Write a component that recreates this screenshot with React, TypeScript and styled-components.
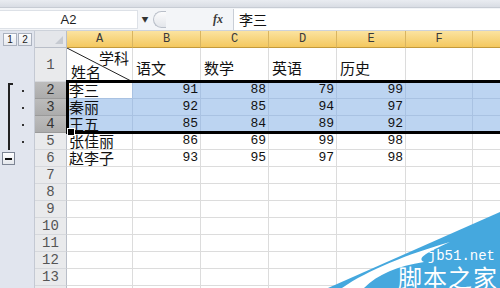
import React from "react";
import styled, { createGlobalStyle, css } from "styled-components";

const GlobalStyle = createGlobalStyle`
  html, body {
    margin: 0;
    padding: 0;
    background: #ffffff;
  }
  body {
    font-family: "Noto Sans CJK SC", "Liberation Sans", sans-serif;
  }
`;

const CJK = `"Noto Sans CJK SC", sans-serif`;
const MONO = `"Liberation Mono", "DejaVu Sans Mono", monospace`;

const Page = styled.div`
  position: relative;
  width: 500px;
  height: 288px;
  overflow: hidden;
  background: #ffffff;
`;

const RibbonEdge = styled.div`
  height: 8px;
  background: linear-gradient(#e9ecf1, #d9dde4);
  border-bottom: 1px solid #c7ccd4;
  box-sizing: border-box;
`;

const FormulaBar = styled.div`
  height: 23px;
  display: flex;
  align-items: center;
  background: #f3f5f8;
  border-bottom: 1px solid #cdd2da;
  box-sizing: border-box;
`;

const NameBox = styled.div`
  width: 138px;
  height: 19px;
  background: #ffffff;
  border: 1px solid #dde1e7;
  border-left: none;
  display: flex;
  align-items: center;
  justify-content: center;
  font-family: "Liberation Sans", Arial, sans-serif;
  font-size: 13px;
  color: #1e1e1e;
  box-sizing: border-box;
`;

const DropArrow = styled.div`
  width: 14px;
  display: flex;
  justify-content: center;
  font-size: 7px;
  color: #333;
`;

const Grip = styled.div`
  width: 13px;
  height: 17px;
  margin-left: 1px;
  border: 1px solid #b9bfc9;
  border-right: none;
  border-radius: 9px 0 0 9px;
  background: linear-gradient(#fbfbfc, #e3e6eb);
  box-sizing: border-box;
`;

const FxButton = styled.div`
  margin-left: auto;
  width: 30px;
  text-align: center;
  font-family: "Liberation Serif", serif;
  font-style: italic;
  font-weight: bold;
  font-size: 12px;
  color: #3b3b3b;
`;

const FormulaInput = styled.div`
  width: 267px;
  height: 21px;
  background: #ffffff;
  border-left: 1px solid #c9ced6;
  display: flex;
  align-items: center;
  padding-left: 5px;
  font-family: ${CJK};
  font-size: 14px;
  color: #111;
  box-sizing: border-box;
`;

const Sheet = styled.div`
  position: relative;
  display: grid;
  grid-template-columns: 35px 32px 66px 68px 68px 68px 69px 67px 67px;
  grid-template-rows: 17px 34px repeat(13, 17px);
  width: 540px;
`;

const Gutter = styled.div`
  position: relative;
  background: #e1e5ee;
  border-right: 1px solid #c4c9d3;
  box-sizing: border-box;
`;

const LevelButtons = styled.div`
  display: flex;
  gap: 1px;
  padding: 2px 0 0 3px;
`;

const LevelButton = styled.div`
  width: 14px;
  height: 13px;
  border: 1px solid #aab1be;
  background: linear-gradient(#fdfdfe, #e6e9ef);
  font-family: "Liberation Sans", Arial, sans-serif;
  font-size: 10px;
  line-height: 11px;
  text-align: center;
  color: #222;
  box-sizing: border-box;
`;

const Bracket = styled.div<{ $top?: boolean }>`
  position: absolute;
  left: 8px;
  top: 0;
  bottom: 0;
  width: 5px;
  border-left: 2px solid #222;
  box-sizing: border-box;
  ${(p) =>
    p.$top &&
    css`
      top: 1px;
      border-top: 2px solid #222;
    `}
`;

const Dot = styled.div`
  position: absolute;
  left: 22px;
  top: 8px;
  width: 2px;
  height: 2px;
  background: #333;
`;

const CollapseButton = styled.div`
  position: absolute;
  left: 2px;
  top: 2px;
  width: 13px;
  height: 13px;
  border: 1px solid #7d8594;
  background: linear-gradient(#ffffff, #e4e7ec);
  box-sizing: border-box;
  display: flex;
  align-items: center;
  justify-content: center;
  &::after {
    content: "";
    width: 7px;
    height: 2px;
    background: #111;
  }
`;

const Corner = styled.div`
  position: relative;
  background: #e4e6ea;
  border-right: 1px solid #b9bec8;
  border-bottom: 1px solid #b9bec8;
  box-sizing: border-box;
  &::after {
    content: "";
    position: absolute;
    right: 3px;
    bottom: 3px;
    border-left: 8px solid transparent;
    border-bottom: 8px solid #c6cad1;
  }
`;

const ColHead = styled.div`
  display: flex;
  align-items: center;
  justify-content: center;
  background: linear-gradient(#fbe3a0, #f4c85f);
  border-right: 1px solid #d9b560;
  border-bottom: 1px solid #c39a3c;
  font-family: ${MONO};
  font-size: 12px;
  color: #3a3a3a;
  box-sizing: border-box;
`;

const RowHead = styled.div<{ $selected?: boolean }>`
  display: flex;
  align-items: center;
  justify-content: center;
  background: ${(p) => (p.$selected ? "linear-gradient(#bcbcbc, #acacac)" : "#e9eaec")};
  border-right: 1px solid #b9bec8;
  border-bottom: 1px solid ${(p) => (p.$selected ? "#9a9a9a" : "#d6d8dc")};
  font-family: ${MONO};
  font-size: 14px;
  color: ${(p) => (p.$selected ? "#333" : "#555")};
  box-sizing: border-box;
`;

const Cell = styled.div<{ $selected?: boolean; $num?: boolean; $active?: boolean; $header?: boolean }>`
  display: flex;
  align-items: ${(p) => (p.$header ? "flex-end" : "center")};
  justify-content: ${(p) => (p.$num ? "flex-end" : "flex-start")};
  padding: ${(p) => (p.$header ? "0 0 5px 3px" : p.$num ? "0 2px 0 0" : "0 0 0 2px")};
  background: ${(p) => (p.$selected && !p.$active ? "#bcd4f1" : "#ffffff")};
  border-right: 1px solid ${(p) => (p.$selected ? "#a9c2e2" : "#dcdcdc")};
  border-bottom: 1px solid ${(p) => (p.$selected ? "#a9c2e2" : "#dcdcdc")};
  font-family: ${(p) => (p.$num ? MONO : CJK)};
  font-size: ${(p) => (p.$num ? "13px" : "15px")};
  line-height: 16px;
  color: #111;
  box-sizing: border-box;
  white-space: nowrap;
`;

const SplitCell = styled.div`
  position: relative;
  background: #ffffff;
  border-right: 1px solid #dcdcdc;
  border-bottom: 1px solid #dcdcdc;
  box-sizing: border-box;
  font-family: ${CJK};
  font-size: 15px;
  line-height: 16px;
  color: #111;
`;

const SplitLine = styled.svg`
  position: absolute;
  inset: 0;
`;

const SplitTop = styled.span`
  position: absolute;
  right: 3px;
  top: 2px;
`;

const SplitBottom = styled.span`
  position: absolute;
  left: 4px;
  bottom: 1px;
`;

const Selection = styled.div`
  position: absolute;
  left: 66px;
  right: -10px;
  top: 49px;
  height: 54px;
  border: 3px solid #000;
  border-right: none;
  box-sizing: border-box;
  pointer-events: none;
`;

const FillHandle = styled.div`
  position: absolute;
  left: -2px;
  bottom: -5px;
  width: 6px;
  height: 6px;
  background: #000;
  border: 1px solid #fff;
`;

const Watermark = styled.div`
  position: absolute;
  right: 0;
  bottom: 0;
  width: 172px;
  height: 76px;
`;

const WatermarkShape = styled.svg`
  position: absolute;
  inset: 0;
`;

const WatermarkText = styled.div`
  position: absolute;
  right: 2px;
  bottom: -1px;
  display: flex;
  flex-direction: column;
  align-items: flex-end;
  gap: 2px;
  color: #ffffff;
`;

const Domain = styled.span`
  font-family: ${MONO};
  font-size: 14px;
  line-height: 14px;
  margin-right: 3px;
`;

const BrandName = styled.span`
  font-family: ${CJK};
  font-size: 24px;
  line-height: 24px;
  letter-spacing: 1px;
`;

type Row = { name: string; scores: number[] };

const data: Row[] = [
  { name: "李三", scores: [91, 88, 79, 99] },
  { name: "秦丽", scores: [92, 85, 94, 97] },
  { name: "王五", scores: [85, 84, 89, 92] },
  { name: "张佳丽", scores: [86, 69, 99, 98] },
  { name: "赵李子", scores: [93, 95, 97, 98] },
];

const columns = ["A", "B", "C", "D", "E", "F", "G"];
const subjects = ["语文", "数学", "英语", "历史", "", ""];

const App: React.FC = () => {
  const emptyRows = Array.from({ length: 8 }, (_, i) => i + 7);
  const grouped = data.slice(0, 4);
  const last = data[4];

  return (
    <Page>
      <GlobalStyle />
      <RibbonEdge />
      <FormulaBar>
        <NameBox>A2</NameBox>
        <DropArrow>▼</DropArrow>
        <Grip />
        <FxButton>fx</FxButton>
        <FormulaInput>李三</FormulaInput>
      </FormulaBar>

      <Sheet>
        {/* header row */}
        <Gutter>
          <LevelButtons>
            <LevelButton>1</LevelButton>
            <LevelButton>2</LevelButton>
          </LevelButtons>
        </Gutter>
        <Corner />
        {columns.map((c) => (
          <ColHead key={c}>{c}</ColHead>
        ))}

        {/* row 1 */}
        <Gutter />
        <RowHead>1</RowHead>
        <SplitCell>
          <SplitLine width="66" height="34">
            <line x1="0" y1="0" x2="66" y2="34" stroke="#222" strokeWidth="1" />
          </SplitLine>
          <SplitTop>学科</SplitTop>
          <SplitBottom>姓名</SplitBottom>
        </SplitCell>
        {subjects.map((s, i) => (
          <Cell key={i} $header>
            {s}
          </Cell>
        ))}

        {/* grouped rows 2-5 */}
        {grouped.map((row, i) => {
          const rowNo = i + 2;
          const selected = rowNo <= 4;
          return (
            <React.Fragment key={rowNo}>
              <Gutter>
                <Bracket $top={rowNo === 2} />
                <Dot />
              </Gutter>
              <RowHead $selected={selected}>{rowNo}</RowHead>
              <Cell $selected={selected} $active={rowNo === 2}>
                {row.name}
              </Cell>
              {row.scores.map((s, j) => (
                <Cell key={j} $num $selected={selected}>
                  {s}
                </Cell>
              ))}
              <Cell $selected={selected} />
              <Cell $selected={selected} />
            </React.Fragment>
          );
        })}

        {/* row 6 with collapse button */}
        <Gutter>
          <CollapseButton />
        </Gutter>
        <RowHead>6</RowHead>
        <Cell>{last.name}</Cell>
        {last.scores.map((s, j) => (
          <Cell key={j} $num>
            {s}
          </Cell>
        ))}
        <Cell />
        <Cell />

        {emptyRows.map((n) => (
          <React.Fragment key={n}>
            <Gutter />
            <RowHead>{n}</RowHead>
            {columns.map((c) => (
              <Cell key={c} />
            ))}
          </React.Fragment>
        ))}

        <Selection>
          <FillHandle />
        </Selection>
      </Sheet>

      <Watermark>
        <WatermarkShape width="172" height="76" viewBox="0 0 172 76">
          <polygon points="0,76 172,0 172,76" fill="#45a8de" />
          <path d="M14,76 C40,58 80,42 122,30 C100,40 88,46 96,50 C70,54 50,62 36,76 Z" fill="#ffffff" />
        </WatermarkShape>
        <WatermarkText>
          <Domain>jb51.net</Domain>
          <BrandName>脚本之家</BrandName>
        </WatermarkText>
      </Watermark>
    </Page>
  );
};

export default App;
